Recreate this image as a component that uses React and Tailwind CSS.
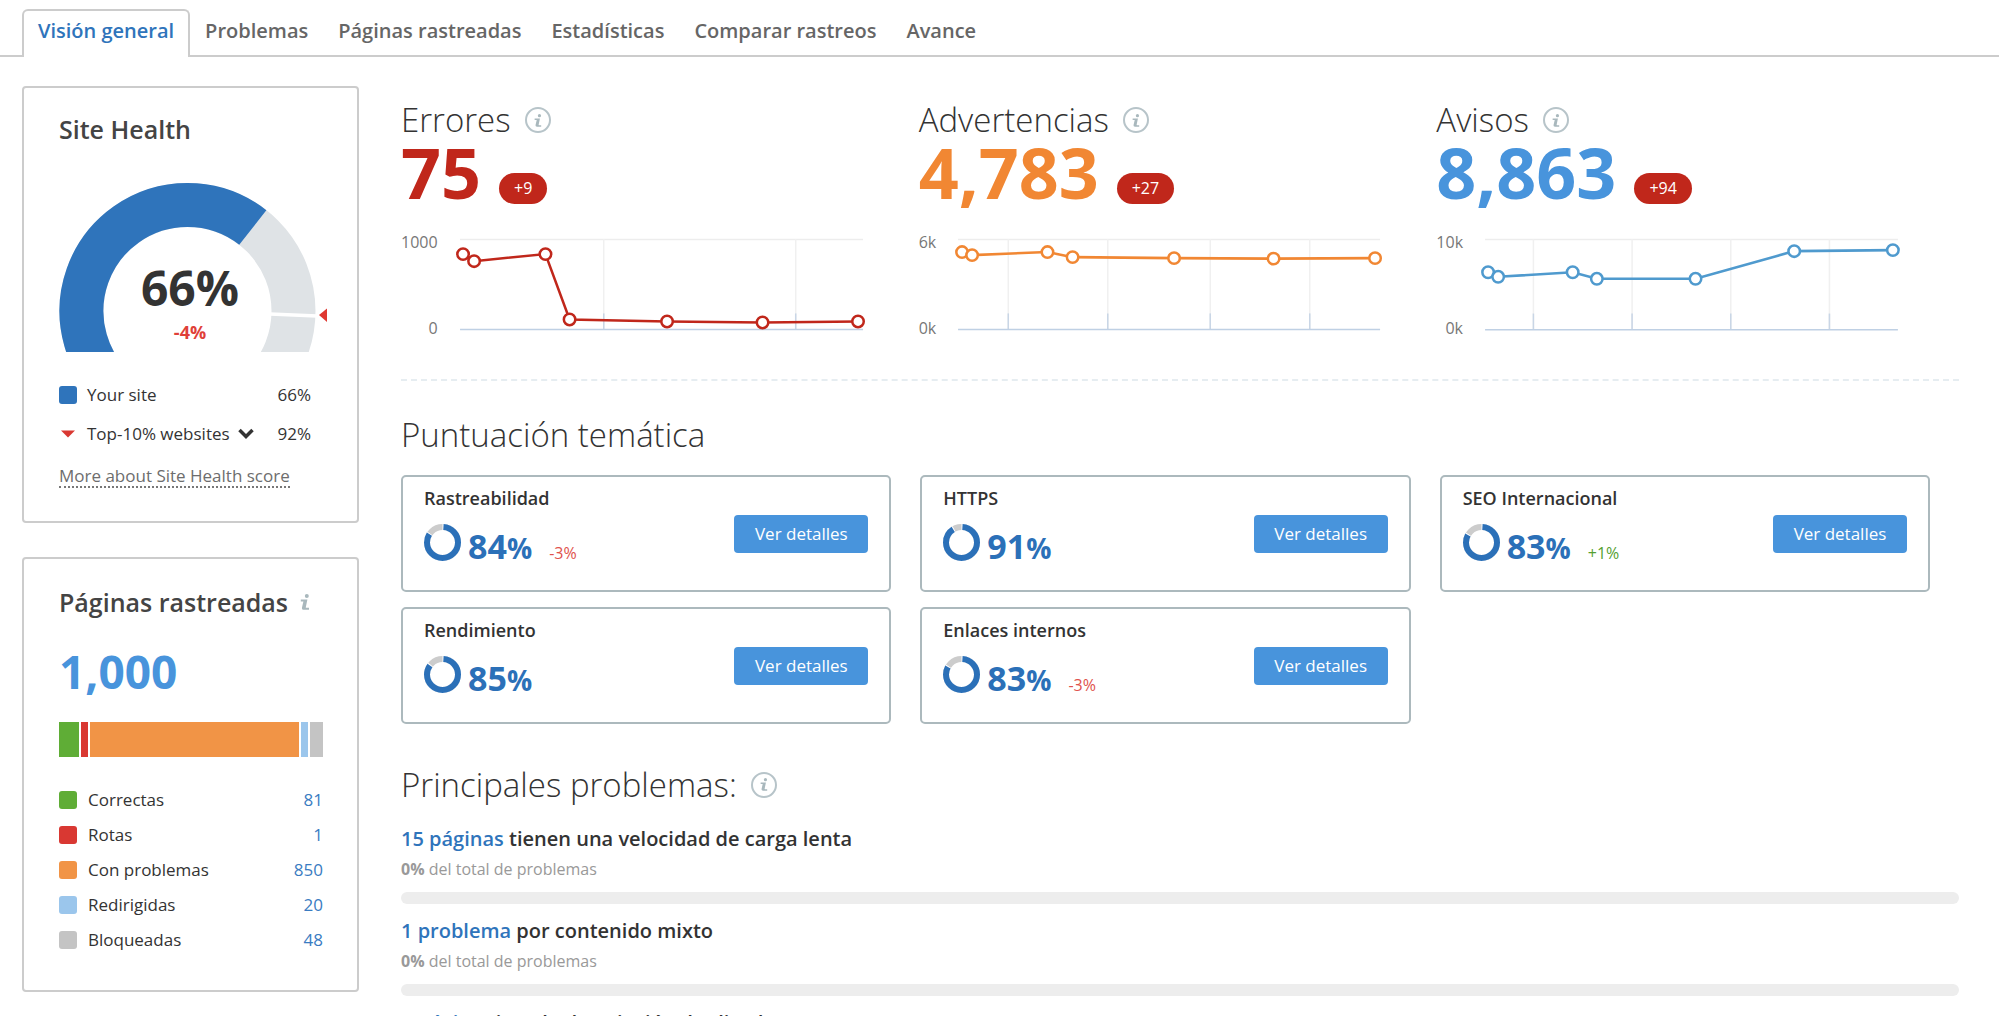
import clsx from 'clsx';

const tabs = ['Visión general', 'Problemas', 'Páginas rastreadas', 'Estadísticas', 'Comparar rastreos', 'Avance'];

const crawled = [
  { label: 'Correctas', value: 81, color: 'bg-[#5fad36]', bar: 'w-5' },
  { label: 'Rotas', value: 1, color: 'bg-[#d93832]', bar: 'w-[7px]' },
  { label: 'Con problemas', value: 850, color: 'bg-[#f19446]', bar: 'grow' },
  { label: 'Redirigidas', value: 20, color: 'bg-[#9bc6ec]', bar: 'w-[7px]' },
  { label: 'Bloqueadas', value: 48, color: 'bg-[#c4c4c4]', bar: 'w-[13px]' },
];

const metrics = [
  {
    title: 'Errores',
    value: '75',
    delta: '+9',
    text: 'text-[#c0271b]',
    stroke: '#c0271b',
    max: '1000',
    min: '0',
    width: 411,
    grid: [149, 340],
    points: [[9, 22], [20, 29], [91, 22], [115, 87], [212, 89], [307, 90], [402, 89]],
  },
  {
    title: 'Advertencias',
    value: '4,783',
    delta: '+27',
    text: 'text-[#f18733]',
    stroke: '#f18733',
    max: '6k',
    min: '0k',
    width: 430,
    grid: [56, 155, 257, 356],
    points: [[10, 20], [20, 23], [95, 20], [120, 25], [221, 26], [320, 26.5], [421, 26]],
  },
  {
    title: 'Avisos',
    value: '8,863',
    delta: '+94',
    text: 'text-[#4894dc]',
    stroke: '#4f9ace',
    max: '10k',
    min: '0k',
    width: 420,
    grid: [54, 152, 250, 348],
    points: [[9, 40], [19, 44.5], [93, 40], [117, 46.5], [215, 46.5], [313, 19], [411, 18]],
  },
];

const topics = [
  { title: 'Rastreabilidad', score: 84, delta: '-3%' },
  { title: 'HTTPS', score: 91 },
  { title: 'SEO Internacional', score: 83, delta: '+1%' },
  { title: 'Rendimiento', score: 85 },
  { title: 'Enlaces internos', score: 83, delta: '-3%' },
];

const issues = [
  { link: '15 páginas', text: 'tienen una velocidad de carga lenta' },
  { link: '1 problema', text: 'por contenido mixto' },
  { link: '1 página', text: 'tiene la descripción duplicada' },
];

function InfoGlyph({ className }) {
  return (
    <svg viewBox="0 0 10 16" className={className} fill="#a9b8bd" aria-hidden="true">
      <circle cx="6.8" cy="2" r="2" />
      <path d="M0.8 5.4H7.4L5.8 13.2C5.7 13.6 5.8 13.8 6.2 13.8H9V15.8H3.8C2.4 15.8 1.7 14.9 2 13.4L3.4 7.4H0.8Z" />
    </svg>
  );
}

function InfoButton() {
  return (
    <button
      type="button"
      aria-label="Información"
      className="flex size-[26px] items-center justify-center rounded-full border-2 border-[#b7c4c9]"
    >
      <InfoGlyph className="h-[13px] w-2" />
    </button>
  );
}

function Gauge() {
  return (
    <div className="relative mt-[42px]">
      <svg viewBox="0 0 268 170" className="h-[170px] w-[268px]" aria-hidden="true">
        <defs>
          <clipPath id="gauge-clip">
            <rect width="268" height="169" />
          </clipPath>
        </defs>
        <g clipPath="url(#gauge-clip)" fill="none" strokeWidth="44">
          <circle cx="128.5" cy="128" r="106" stroke="#dfe3e6" />
          <path d="M62 210.6A106 106 0 0 1 128.5 22A106 106 0 0 1 193.8 44.5" stroke="#2f74bb" />
        </g>
        <path d="M211 131L258 133" stroke="#fff" strokeWidth="3.5" />
        <path d="M260 132L268 125.5V139Z" fill="#df3831" />
      </svg>
      <div className="absolute inset-x-0 top-[77px] flex w-[262px] flex-col items-center">
        <span className="text-5xl leading-14 font-bold text-[#333]">66%</span>
        <span className="mt-1 text-lg leading-6 font-bold text-[#df3f39]">-4%</span>
      </div>
    </div>
  );
}

function SiteHealth() {
  return (
    <section className="h-[437px] rounded-sm border-2 border-[#ccc] px-[35px] pt-[29px]">
      <h2 className="text-[25px] leading-6 font-semibold text-[#444]">Site Health</h2>
      <Gauge />
      <ul className="mt-[22px] w-[252px] text-[17px] leading-[39px]">
        <li className="flex items-center">
          <span className="size-[18px] rounded-[3px] bg-[#2f74bb]" />
          <span className="ml-[10px] grow">Your site</span>
          <span>66%</span>
        </li>
        <li className="flex items-center">
          <svg viewBox="0 0 18 8" className="h-2 w-[18px]" aria-hidden="true">
            <path d="M2 0.5H16L9 7.5Z" fill="#d93832" />
          </svg>
          <button type="button" className="ml-[10px] flex grow items-center gap-2">
            Top-10% websites
            <svg viewBox="0 0 16 12" className="h-3 w-4" fill="none" stroke="#333" strokeWidth="3.5" aria-hidden="true">
              <path d="M1.5 2L8 8.5L14.5 2" />
            </svg>
          </button>
          <span>92%</span>
        </li>
      </ul>
      <a href="#score" className="mt-[13px] inline-block border-b-2 border-dotted border-[#777] text-[17px] leading-5 text-[#6d6d6d]">
        More about Site Health score
      </a>
    </section>
  );
}

function CrawledPages() {
  return (
    <section className="h-[435px] rounded-sm border-2 border-[#ccc] px-[35px] pt-[31px]">
      <h2 className="flex items-center gap-3 text-[25px] leading-6 font-semibold text-[#444]">
        Páginas rastreadas
        <InfoGlyph className="h-4 w-[10px]" />
      </h2>
      <p className="mt-[29px] text-[46px] leading-14 font-bold text-[#4894dc]">1,000</p>
      <div className="mt-[23px] flex h-[35px] w-[264px] gap-[2px]">
        {crawled.map((row) => (
          <div key={row.label} className={clsx(row.color, row.bar)} />
        ))}
      </div>
      <ul className="mt-[25px] w-[264px] text-[17px] leading-[35px]">
        {crawled.map((row) => (
          <li key={row.label} className="flex items-center">
            <span className={clsx('size-[18px] rounded-[3px]', row.color)} />
            <span className="ml-[11px] grow">{row.label}</span>
            <a href="#pages" className="text-[#3a7cc2]">{row.value}</a>
          </li>
        ))}
      </ul>
    </section>
  );
}

function Trend({ metric }) {
  const { width, grid, points, stroke } = metric;
  return (
    <svg viewBox={`0 0 ${width} 106`} className="min-w-0 grow" aria-hidden="true">
      <path d={`M6 7.5H${width - 4}`} stroke="#ededed" strokeWidth="1.5" />
      {grid.map((x) => (
        <g key={x} strokeWidth="1.5">
          <path d={`M${x} 7V97`} stroke="#f0f0f0" />
          <path d={`M${x} 81V97`} stroke="#c9d6e6" />
        </g>
      ))}
      <path d={`M6 97H${width - 4}`} stroke="#bfd0e4" strokeWidth="1.5" />
      <polyline points={points.join(' ')} fill="none" stroke={stroke} strokeWidth="2.5" />
      {points.map(([x, y]) => (
        <circle key={x} cx={x} cy={y} r="5.7" fill="#fff" stroke={stroke} strokeWidth="2.5" />
      ))}
    </svg>
  );
}

function Metric({ metric }) {
  return (
    <section>
      <h2 className="flex items-center gap-[14px] text-[33px] leading-10 font-light">
        {metric.title}
        <InfoButton />
      </h2>
      <div className="flex items-end gap-[18px]">
        <span className={clsx('text-[70px] leading-16 font-bold', metric.text)}>{metric.value}</span>
        <span className="rounded-full bg-[#c0271b] px-[15px] text-base leading-[31px] text-white">{metric.delta}</span>
      </div>
      <div className="mt-7 flex gap-4 pr-[52px]">
        <div className="flex h-[106px] flex-col justify-between text-right text-base leading-5 text-[#777]">
          <span>{metric.max}</span>
          <span>{metric.min}</span>
        </div>
        <Trend metric={metric} />
      </div>
    </section>
  );
}

function ScoreRing({ score }) {
  return (
    <svg viewBox="0 0 37 37" className="size-[37px] -rotate-90" fill="none" strokeWidth="6" aria-hidden="true">
      <circle cx="18.5" cy="18.5" r="15.5" stroke="#ccc" />
      <circle cx="18.5" cy="18.5" r="15.5" stroke="#fff" pathLength="100" strokeDasharray={`${score + 1} 100`} />
      <circle cx="18.5" cy="18.5" r="15.5" stroke="#2b70b8" pathLength="100" strokeDasharray={`${score - 1} 100`} strokeDashoffset="-1" />
    </svg>
  );
}

function TopicCard({ topic }) {
  return (
    <article className="flex h-[117px] justify-between rounded-[5px] border-2 border-[#acb9bd] px-[21px]">
      <div className="pt-[9px]">
        <h3 className="text-lg leading-6 font-semibold">{topic.title}</h3>
        <div className="mt-[14px] flex">
          <ScoreRing score={topic.score} />
          <p className="ml-[7px] text-[34px] leading-11 font-bold text-[#2b70b8]">
            {topic.score}
            <span className="text-[28px]">%</span>
          </p>
          {topic.delta && (
            <span
              className={clsx(
                'ml-[17px] pt-[5px] text-base leading-12',
                topic.delta.startsWith('+') ? 'text-[#55a031]' : 'text-[#e0524c]'
              )}
            >
              {topic.delta}
            </span>
          )}
        </div>
      </div>
      <button type="button" className="mt-[38px] h-[38px] w-[134px] rounded-[4px] bg-[#4894dc] text-[17px] text-white">
        Ver detalles
      </button>
    </article>
  );
}

export default function App() {
  return (
    <div className="h-screen overflow-hidden bg-white font-['Open_Sans',sans-serif] text-[#333]">
      {/* Tabs */}
      <nav className="flex h-[57px] items-end border-b-2 border-[#ccc] pl-[22px] text-xl font-semibold text-[#666]">
        {tabs.map((tab, i) => (
          <a
            key={tab}
            href="#tab"
            className={clsx(
              '-mb-[2px] h-12 rounded-t-md border-2 border-b-0 leading-10',
              i === 0 ? 'border-[#ccc] bg-white px-[14px] text-[#2f74bb]' : 'border-transparent px-[13px]'
            )}
          >
            {tab}
          </a>
        ))}
      </nav>

      <div className="flex gap-[42px] pt-[29px] pr-10 pl-[22px]">
        <aside className="flex w-[337px] shrink-0 flex-col gap-[34px]">
          <SiteHealth />
          <CrawledPages />
        </aside>

        <main className="min-w-0 grow pt-[14px]">
          <div className="grid grid-cols-3 border-b-2 border-dashed border-[#e6edf1] pr-[5px] pb-10">
            {metrics.map((metric) => (
              <Metric key={metric.title} metric={metric} />
            ))}
          </div>

          <h2 className="mt-[34px] text-[33px] leading-10 font-light">Puntuación temática</h2>
          <div className="mt-5 mr-[29px] grid grid-cols-3 gap-x-[29px] gap-y-[15px]">
            {topics.map((topic) => (
              <TopicCard key={topic.title} topic={topic} />
            ))}
          </div>

          <h2 className="mt-[41px] flex items-center gap-[14px] text-[33px] leading-10 font-light">
            Principales problemas:
            <InfoButton />
          </h2>
          <ul className="mt-5">
            {issues.map((issue) => (
              <li key={issue.link} className="mb-[13px]">
                <p className="text-xl leading-7 font-semibold">
                  <a href="#issue" className="text-[#2f74bb]">{issue.link}</a> {issue.text}
                </p>
                <p className="mt-1 text-base leading-6 text-[#999]">
                  <b>0%</b> del total de problemas
                </p>
                <div className="mt-[11px] h-3 rounded-full bg-[#ededed]" />
              </li>
            ))}
          </ul>
        </main>
      </div>
    </div>
  );
}
